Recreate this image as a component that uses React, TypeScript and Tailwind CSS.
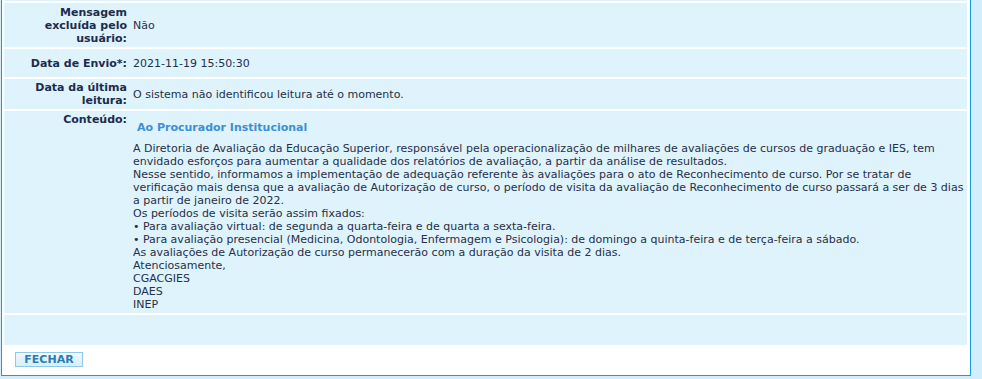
const font = { fontFamily: '"DejaVu Sans", Verdana, sans-serif' };

const linhas = [
  "A Diretoria de Avaliação da Educação Superior, responsável pela operacionalização de milhares de avaliações de cursos de graduação e IES, tem",
  "envidado esforços para aumentar a qualidade dos relatórios de avaliação, a partir da análise de resultados.",
  "Nesse sentido, informamos a implementação de adequação referente às avaliações para o ato de Reconhecimento de curso. Por se tratar de",
  "verificação mais densa que a avaliação de Autorização de curso, o período de visita da avaliação de Reconhecimento de curso passará a ser de 3 dias",
  "a partir de janeiro de 2022.",
  "Os períodos de visita serão assim fixados:",
  "• Para avaliação virtual: de segunda a quarta-feira e de quarta a sexta-feira.",
  "• Para avaliação presencial (Medicina, Odontologia, Enfermagem e Psicologia): de domingo a quinta-feira e de terça-feira a sábado.",
  "As avaliações de Autorização de curso permanecerão com a duração da visita de 2 dias.",
  "Atenciosamente,",
  "CGACGIES",
  "DAES",
  "INEP",
];

function Row({
  label,
  children,
  h,
  top = false,
}: {
  label: React.ReactNode;
  children?: React.ReactNode;
  h: string;
  top?: boolean;
}) {
  return (
    <div className={`flex bg-[#dff3fc] ${h} ${top ? "items-start" : "items-center"}`}>
      <div
        className={`w-[126px] shrink-0 pr-[3px] text-right font-bold text-[#1d2c4d] whitespace-nowrap ${
          top ? "pt-[2px]" : ""
        }`}
      >
        {label}
      </div>
      <div className="flex-1 pl-[3px] text-[#263048]">{children}</div>
    </div>
  );
}

export default function App() {
  return (
    <div
      className="min-h-screen w-[982px] bg-[#d2eefd] pl-px pr-[11px] text-[11px] leading-[13px]"
      style={font}
    >
      <div className="border-x border-b border-[#1a9ae0] bg-white pl-[2px] pr-[3px]">
        <div className="flex flex-col gap-[2px]">
          <div className="h-px bg-[#dff3fc]" />
          <Row
            h="h-[44px]"
            label={
              <>
                Mensagem
                <br />
                excluída pelo
                <br />
                usuário:
              </>
            }
          >
            Não
          </Row>
          <Row h="h-[28px]" label="Data de Envio*:">
            2021-11-19 15:50:30
          </Row>
          <Row
            h="h-[30px]"
            label={
              <>
                Data da última
                <br />
                leitura:
              </>
            }
          >
            O sistema não identificou leitura até o momento.
          </Row>
          <Row h="h-[202px]" top label="Conteúdo:">
            <div className="pt-[10px]">
              <div className="pl-[4px] font-bold text-[#3b8fd9]">Ao Procurador Institucional</div>
              <div className="mt-[8px] whitespace-nowrap">
                {linhas.map((l) => (
                  <div key={l}>{l}</div>
                ))}
              </div>
            </div>
          </Row>
          <div className="h-[30px] bg-[#dff3fc]" />
        </div>
        <div className="pt-[7px] pb-[8px] pl-[11px]">
          <button className="flex h-[15px] w-[68px] items-center justify-center border border-[#8ecbe8] bg-gradient-to-b from-[#f0f9fe] to-[#d6eefa] text-[11px] font-bold text-[#2d7bb5]">
            FECHAR
          </button>
        </div>
      </div>
    </div>
  );
}
